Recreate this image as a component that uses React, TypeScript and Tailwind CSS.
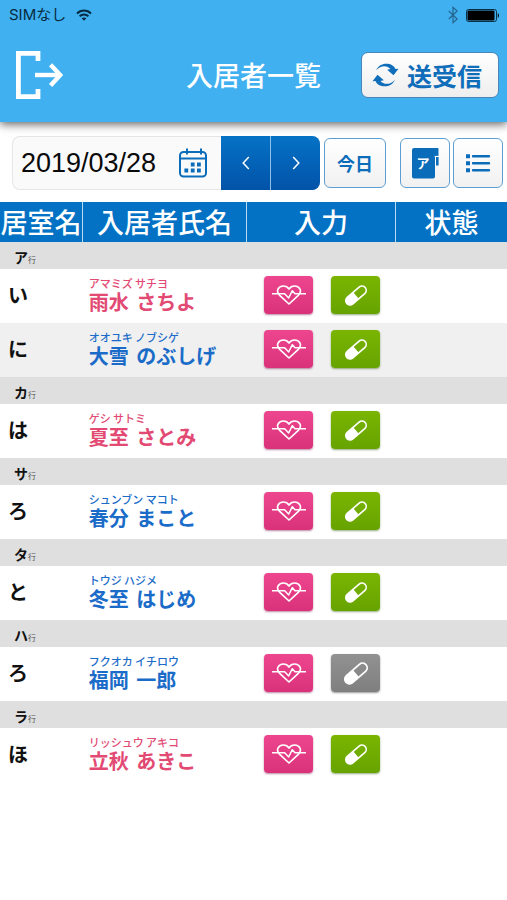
import React from 'react';
import { clsx } from 'clsx';

type Resident = {
  room: string;
  kana: string;
  family: string;
  given: string;
  female: boolean;
  noMedicine?: boolean;
};

type Group = {
  head: string;
  residents: Resident[];
};

const groups: Group[] = [
  {
    head: 'ア',
    residents: [
      { room: 'い', kana: 'アマミズ サチヨ', family: '雨水', given: 'さちよ', female: true },
      { room: 'に', kana: 'オオユキ ノブシゲ', family: '大雪', given: 'のぶしげ', female: false },
    ],
  },
  { head: 'カ', residents: [{ room: 'は', kana: 'ゲシ サトミ', family: '夏至', given: 'さとみ', female: true }] },
  { head: 'サ', residents: [{ room: 'ろ', kana: 'シュンブン マコト', family: '春分', given: 'まこと', female: false }] },
  { head: 'タ', residents: [{ room: 'と', kana: 'トウジ ハジメ', family: '冬至', given: 'はじめ', female: false }] },
  {
    head: 'ハ',
    residents: [
      { room: 'ろ', kana: 'フクオカ イチロウ', family: '福岡', given: '一郎', female: false, noMedicine: true },
    ],
  },
  { head: 'ラ', residents: [{ room: 'ほ', kana: 'リッシュウ アキコ', family: '立秋', given: 'あきこ', female: true }] },
];

const WifiIcon = () => (
  <svg viewBox="0 0 16 12" className="h-3 w-4" fill="none" stroke="currentColor" strokeWidth="2">
    <path d="M1 4.6C5 .6 11 .6 15 4.6" />
    <path d="M3.6 7.2c2.5-2.4 6.3-2.4 8.8 0" />
    <path d="M8 11.8 5.6 9.3c1.4-1.2 3.4-1.2 4.8 0z" fill="currentColor" stroke="none" />
  </svg>
);

const BluetoothIcon = () => (
  <svg viewBox="0 0 10 18" className="h-[18px] w-[10px] text-[#24658c]" fill="none" stroke="currentColor" strokeWidth="1.2">
    <path d="m.8 5 8.4 8L5 16.6V1.4L9.2 5 .8 13" />
  </svg>
);

const BatteryIcon = () => (
  <svg viewBox="0 0 34 13" className="h-[13px] w-[34px]">
    <rect x=".5" y=".5" width="30" height="12" rx="2" fill="none" stroke="#0b3046" />
    <rect x="1.5" y="1.5" width="27" height="10" rx="1" fill="#000" />
    <path d="M31.8 4.2c1.5.4 1.5 4.2 0 4.6z" fill="#000" />
  </svg>
);

const ExitIcon = () => (
  <svg viewBox="0 0 48 48" className="size-12" fill="none" stroke="currentColor" strokeWidth="4.8">
    <path d="M22 10V2.4H2.4v43.2H22V38" />
    <path d="M19 24h26" strokeWidth="4.4" />
    <path d="m34.6 13.8 9.6 10.2-9.6 10.6" strokeWidth="4.4" />
  </svg>
);

const SyncIcon = () => (
  <svg viewBox="0 0 80 72" className="h-6 w-[27px]" fill="currentColor">
    <path d="M12 22C18 8 29 2 42 2c14 0 24 6 28 16l9-1-15 20-19-17 10-2C46 7 26 5 12 22z" />
    <path d="M12 22C18 8 29 2 42 2c14 0 24 6 28 16l9-1-15 20-19-17 10-2C46 7 26 5 12 22z" transform="rotate(180 40 36)" />
  </svg>
);

const CalendarIcon = () => (
  <svg viewBox="0 0 28 30" className="h-[30px] w-7" fill="none" stroke="currentColor" strokeWidth="2">
    <rect x="1" y="4" width="26" height="24.5" rx="3.5" />
    <path d="M1 10.6h26M8 .5v6M22 .5v6" />
    <path
      d="M11.8 14.6h3.8v3.8h-3.8zM18 14.6h3.8v3.8H18zM5.4 20.6h3.8v3.8H5.4zM11.8 20.6h3.8v3.8h-3.8zM18 20.6h3.8v3.8H18z"
      fill="currentColor"
      stroke="none"
    />
  </svg>
);

const ListIcon = () => (
  <svg viewBox="0 0 26 20" className="h-5 w-[26px]" fill="none" stroke="currentColor">
    <path d="M1 3.2h4M1 10.2h4M1 17.2h4" strokeWidth="4" />
    <path d="M8 3.2h16M8 10.2h16M8 17.2h16" strokeWidth="2.4" strokeLinecap="round" />
  </svg>
);

const BookIcon = () => (
  <svg viewBox="0 0 27 31" className="h-[31px] w-[27px]" fill="currentColor">
    <path d="M2 0h23.5a1 1 0 0 1 1 1v7H23v20.5a2 2 0 0 1-2 2H2a2 2 0 0 1-2-2V2a2 2 0 0 1 2-2z" />
    <path d="M24 9h2.6v8.5H24z" />
    <path d="M22.6 8.4h4M23.5 8.4V18" stroke="#fff" strokeWidth=".9" />
  </svg>
);

const HeartIcon = () => (
  <svg viewBox="0 0 102 60" className="h-5 w-[34px]" fill="none" stroke="currentColor" strokeWidth="5" strokeLinejoin="round">
    <path d="M51 57 23 31C10 18 19 3 34 3c8 0 14 4 17 9 3-5 9-9 17-9 15 0 24 15 11 28z" />
    <path d="M0 26h38l12 13 11-22 8 9h33" strokeWidth="4.5" />
  </svg>
);

const PillIcon = ({ large }: { large?: boolean }) => (
  <svg viewBox="-36 -32 72 64" className={large ? 'h-[23px] w-[26px]' : 'h-[21px] w-6'}>
    <g transform="rotate(-41)">
      <rect x="-37" y="-13" width="74" height="26" rx="13" fill="none" stroke="#fff" strokeWidth="5" />
      <path d="M0-13h-24a13 13 0 0 0 0 26H0z" fill="#fff" />
    </g>
  </svg>
);

const Chevron = ({ d }: { d: string }) => (
  <svg viewBox="0 0 8 14" className="h-[14px] w-2" fill="none" stroke="currentColor" strokeWidth="1.5">
    <path d={d} />
  </svg>
);

const outlineButton =
  'flex h-[50px] items-center justify-center rounded-md border border-[#5d9fd3] bg-linear-to-b from-white to-[#f1f1f1] text-[#0b6cba]';
const arrowButton = 'flex w-[49px] items-center justify-center bg-linear-to-b from-[#0572c6] to-[#0353a8] text-white';
const inputButton = 'flex h-[38px] w-[49px] items-center justify-center rounded-[4px] text-white';

const Header: React.FC = () => (
  <header className="relative z-10 bg-[#40b0f0] shadow-[0_2px_9px_rgba(0,0,0,0.65)]">
    <div className="flex h-7 items-center justify-between pt-[2px] pr-[7px] pl-[9px] text-[#062a40]">
      <div className="flex items-center gap-[10px]">
        <span className="font-[Inter,'Noto_Sans_CJK_JP',sans-serif] text-[15px] leading-5">SIMなし</span>
        <WifiIcon />
      </div>
      <div className="flex items-center gap-2">
        <BluetoothIcon />
        <BatteryIcon />
      </div>
    </div>
    <div className="grid grid-cols-[1fr_auto_1fr] items-center px-2 py-[15px]">
      <button type="button" aria-label="ログアウト" className="justify-self-start p-2 text-white">
        <ExitIcon />
      </button>
      <h1 className="text-[27px] leading-8 font-medium text-white">入居者一覧</h1>
      <button
        type="button"
        className="flex h-[46px] items-center gap-2 justify-self-end rounded-[7px] border border-[#4a86b8] bg-linear-to-b from-white to-[#eeeeee] pr-4 pl-[10px] text-[25px] leading-8 font-bold text-[#0f6dba]"
      >
        <SyncIcon />
        送受信
      </button>
    </div>
  </header>
);

const Toolbar: React.FC = () => (
  <div className="flex items-center pt-[14px] pr-1 pb-3 pl-3">
    <div className="flex h-[54px] min-w-0 flex-1 items-center rounded-l-lg border border-r-0 border-[#e6e6e8] bg-[#fafafa] pr-[14px] pl-2">
      <input
        type="text"
        aria-label="日付"
        defaultValue="2019/03/28"
        className="w-full min-w-0 flex-1 bg-transparent font-['Liberation_Sans',Arial,sans-serif] text-[27px] leading-8 text-[#0a0a0a] outline-none"
      />
      <button type="button" aria-label="カレンダー" className="shrink-0 text-[#0b6cba]">
        <CalendarIcon />
      </button>
    </div>
    <div className="flex h-[54px] gap-px overflow-hidden rounded-r-lg bg-[#8fc0e6]">
      <button type="button" aria-label="前の日" className={arrowButton}>
        <Chevron d="M6.8 1 1.2 7l5.6 6" />
      </button>
      <button type="button" aria-label="次の日" className={arrowButton}>
        <Chevron d="m1.2 1 5.6 6-5.6 6" />
      </button>
    </div>
    <button type="button" className={clsx(outlineButton, 'ml-1 w-[62px] text-[18px] font-bold')}>
      今日
    </button>
    <button type="button" aria-label="五十音順" className={clsx(outlineButton, 'relative ml-[14px] w-[50px]')}>
      <BookIcon />
      <span className="absolute inset-0 flex items-center justify-center pr-1 text-[13px] font-bold text-white">ア</span>
    </button>
    <button type="button" aria-label="一覧表示" className={clsx(outlineButton, 'ml-[3px] w-[50px]')}>
      <ListIcon />
    </button>
  </div>
);

const ResidentRow = ({ resident, striped }: { resident: Resident; striped: boolean }) => (
  <tr className={striped ? 'bg-[#f0f0f0]' : 'bg-white'}>
    <td className="h-[54px] pb-[2px] pl-2 text-[20px] leading-6 font-bold text-[#111]">{resident.room}</td>
    <td className={clsx('pb-[2px] pl-[6px] whitespace-nowrap', resident.female ? 'text-[#e24a74]' : 'text-[#1b6cc8]')}>
      <div className="text-[11px] leading-[13px] font-medium">{resident.kana}</div>
      <div className="text-[20px] leading-6 font-bold">
        <span className="mr-[3px]">{resident.family}</span> {resident.given}
      </div>
    </td>
    <td className="pb-[2px] pl-[18px]">
      <div className="flex gap-[18px]">
        <button
          type="button"
          aria-label="バイタル"
          className={clsx(inputButton, 'bg-linear-to-b from-[#ee458f] to-[#d9327b] shadow-[0_1px_2px_rgba(120,20,70,0.5)]')}
        >
          <HeartIcon />
        </button>
        <button
          type="button"
          aria-label="服薬"
          className={clsx(
            inputButton,
            resident.noMedicine
              ? 'bg-linear-to-b from-[#929292] to-[#7f7f7f] shadow-[0_1px_2px_rgba(0,0,0,0.4)]'
              : 'bg-linear-to-b from-[#7ab502] to-[#66a300] shadow-[0_1px_2px_rgba(50,90,0,0.5)]',
          )}
        >
          <PillIcon large={resident.noMedicine} />
        </button>
      </div>
    </td>
    <td />
  </tr>
);

const ResidentTable: React.FC = () => (
  <table className="w-full table-fixed border-collapse">
    <thead>
      <tr className="h-10 bg-[#0472c4] text-[27px] leading-8 whitespace-nowrap text-white">
        <th className="w-[16.3%] p-0 font-medium">居室名</th>
        <th className="w-[32.3%] border-x border-[#b9daf2] p-0 font-medium">入居者氏名</th>
        <th className="w-[29.4%] border-r border-[#b9daf2] p-0 font-medium">入力</th>
        <th className="p-0 font-medium">状態</th>
      </tr>
    </thead>
    {groups.map((group) => (
      <tbody key={group.head}>
        <tr className="bg-[#dfdfdf]">
          <th colSpan={4} className="h-[27px] p-0 pt-[3px] pl-[14px] text-left text-[14px] leading-[18px] font-bold text-[#111]">
            {group.head}
            <span className="text-[8px] leading-none font-normal text-[#555]">行</span>
          </th>
        </tr>
        {group.residents.map((resident, i) => (
          <ResidentRow key={resident.kana} resident={resident} striped={i % 2 === 1} />
        ))}
      </tbody>
    ))}
  </table>
);

const App: React.FC = () => {
  return (
    <div className="min-h-screen bg-white font-['Noto_Sans_CJK_JP',sans-serif]">
      <Header />
      <main>
        <Toolbar />
        <ResidentTable />
      </main>
    </div>
  );
};

export default App;
